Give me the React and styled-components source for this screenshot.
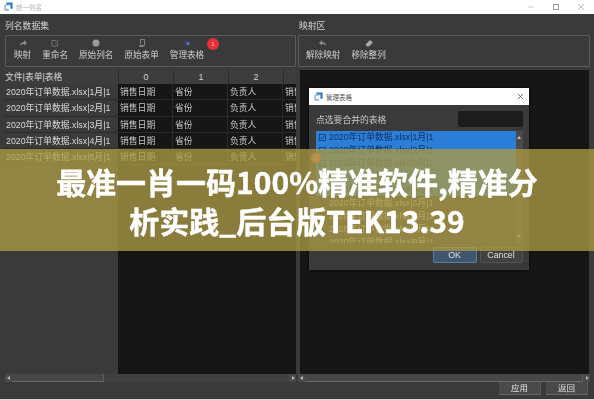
import React from "react";
import styled, {createGlobalStyle} from "styled-components";

const CJK = `"Liberation Sans", "Noto Sans CJK SC", sans-serif`;

const GlobalStyle = createGlobalStyle`
    html, body {
        margin: 0;
        padding: 0;
        background: #3a3a3a;
    }
    * {
        box-sizing: border-box;
    }
`;

const Page = styled.div`
    position: relative;
    width: 594px;
    height: 400px;
    overflow: hidden;
    display: flex;
    flex-direction: column;
    background: #3a3a3a;
    border-bottom: 1px solid #d8d8d8;
    font-family: ${CJK};
    font-size: 8.8px;
    color: #d4d4d4;
`;

const Soft = styled.div`
    flex: 1;
    min-height: 0;
    display: flex;
    flex-direction: column;
    filter: blur(0.35px);
`;

const TitleBar = styled.div`
    height: 13.5px;
    flex: none;
    background: #fff;
    display: flex;
    align-items: center;
    padding: 0 10px 0 4px;
    gap: 3px;
    color: #b0b0b0;
    font-size: 6.5px;
`;

const TitleText = styled.span`
    flex: 1;
`;

const WinControls = styled.div`
    display: flex;
    align-items: center;
    gap: 19px;
`;

const Panels = styled.div`
    flex: 1;
    min-height: 0;
    display: flex;
    padding-left: 5px;
`;

const Panel = styled.div`
    width: ${p => p.$width}px;
    margin-left: ${p => p.$offset || 0}px;
    display: flex;
    flex-direction: column;
`;

const PanelTitle = styled.div`
    height: 21.5px;
    flex: none;
    padding: 6px 0 0 ${p => p.$pad || 0}px;
    line-height: 13px;
    font-size: 8.8px;
`;

const Toolbar = styled.div`
    height: 32px;
    flex: none;
    border: 1px solid #5a5a5a;
    border-radius: 1px;
    display: flex;
    padding: 2px 0 0 ${p => p.$pad}px;
    gap: ${p => p.$gap}px;
`;

const ToolButton = styled.div`
    display: flex;
    flex-direction: column;
    align-items: center;
    font-size: 8.6px;
    line-height: 12px;
    gap: 1px;
    color: #cfcfcf;
    white-space: nowrap;
`;

const ToolIcon = styled.svg`
    width: 10px;
    height: 10px;
    display: block;
`;

const Table = styled.div`
    flex: 1;
    min-height: 0;
    margin: 2.5px ${p => p.$inset ? "1px" : "0"} 0 ${p => p.$inset ? "2px" : "0"};
    display: flex;
    flex-direction: column;
    overflow: hidden;
    background: #161616;
`;

const HeadRow = styled.div`
    height: 14.5px;
    flex: none;
    display: flex;
    background: #3d3d3d;
`;

const Row = styled.div`
    height: 16.3px;
    flex: none;
    display: flex;
    border-bottom: 1px solid #2b2b2b;
`;

const FillRow = styled.div`
    flex: 1;
    display: flex;
`;

const Corner = styled.div`
    width: 113px;
    flex: none;
    line-height: 15px;
    background: #3d3d3d;
`;

const HeadCell = styled.div`
    width: 55px;
    flex: none;
    text-align: center;
    line-height: 15px;
    border-left: 1px solid #2c2c2c;
`;

const RowHead = styled.div`
    width: 113px;
    flex: none;
    background: #3a3a3a;
    padding-left: 1px;
    line-height: 16px;
    white-space: nowrap;
    overflow: hidden;
    color: #d8d8d8;
    font-size: 8.8px;
`;

const Cell = styled.div`
    width: 55px;
    flex: none;
    padding-left: 2px;
    line-height: 16px;
    white-space: nowrap;
    overflow: hidden;
    border-right: 1px solid #2b2b2b;
    color: #c8c8c8;
`;

const ScrollBar = styled.div`
    height: 8px;
    flex: none;
    display: flex;
    background: #404040;
`;

const ScrollArrow = styled.div`
    width: 7px;
    flex: none;
    display: flex;
    align-items: center;
    justify-content: center;
    background: #4a4a4a;
    &::before {
        content: "";
        border: 2px solid transparent;
        ${p => p.$right ? "border-left: 3px solid #b8b8b8; margin-left: 3px;" : "border-right: 3px solid #b8b8b8; margin-right: 3px;"}
    }
`;

const ScrollThumb = styled.div`
    width: ${p => p.$width}px;
    flex: none;
    background: #474747;
    border-bottom: 1px solid #6a6a6a;
    border-right: 1px solid #5c5c5c;
`;

const ScrollTrack = styled.div`
    flex: 1;
`;

const Footer = styled.div`
    height: 17.5px;
    flex: none;
    display: flex;
    justify-content: flex-end;
    gap: 5px;
    padding-right: 6px;
`;

const FootButton = styled.div`
    width: 42px;
    height: 13px;
    background: #4a4a4a;
    border-bottom: 1px solid #666;
    border-right: 1px solid #5a5a5a;
    text-align: center;
    line-height: 13px;
    font-size: 8.5px;
    color: #e0e0e0;
`;

const Dialog = styled.div`
    position: absolute;
    left: 309px;
    top: 88px;
    width: 220px;
    height: 182px;
    background: #3a3a3a;
    box-shadow: 0 0 2px #000;
    display: flex;
    flex-direction: column;
    filter: blur(0.35px);
`;

const DialogTitle = styled.div`
    height: 17px;
    flex: none;
    background: #fff;
    display: flex;
    align-items: center;
    gap: 3px;
    padding: 0 6px 0 5px;
    color: #555;
    font-size: 6.5px;
`;

const DialogBody = styled.div`
    flex: 1;
    padding: 6px 6.5px 0 7px;
    display: flex;
    flex-direction: column;
`;

const DialogHead = styled.div`
    height: 16px;
    flex: none;
    display: flex;
    justify-content: space-between;
    align-items: center;
    font-size: 8.8px;
    color: #c8c8c8;
`;

const SearchBox = styled.div`
    width: 65px;
    height: 16px;
    background: #1c1c1c;
    border-radius: 2px;
`;

const ListWrap = styled.div`
    height: 112px;
    margin-top: 4px;
    flex: none;
    display: flex;
`;

const List = styled.div`
    flex: 1;
    overflow: hidden;
    background: #3a3a3a;
`;

const ListItem = styled.div`
    height: 13.1px;
    display: flex;
    align-items: center;
    gap: 2px;
    padding-left: 3px;
    line-height: 13px;
    white-space: nowrap;
    font-size: 8.8px;
    background: ${p => p.$on ? "#2c7fd8" : "transparent"};
    color: ${p => p.$on ? "#123060" : "#c8c8c8"};
`;

const Check = styled.svg`
    width: 7px;
    height: 7px;
    flex: none;
    margin-right: 1px;
    visibility: ${p => p.$on ? "visible" : "hidden"};
`;

const ListScroll = styled.div`
    width: 7px;
    flex: none;
    background: #4a4a4a;
    display: flex;
    flex-direction: column;
    justify-content: space-between;
    align-items: center;
    padding: 3px 0;
    &::before, &::after {
        content: "";
        border: 2px solid transparent;
    }
    &::before {
        border-bottom: 3px solid #c0c0c0;
    }
    &::after {
        border-top: 3px solid #c0c0c0;
    }
`;

const DialogActions = styled.div`
    margin-top: 4px;
    display: flex;
    justify-content: flex-end;
    gap: 3px;
`;

const DialogButton = styled.div`
    width: ${p => p.$primary ? 44 : 43}px;
    height: 16px;
    border-radius: 2px;
    border: 1px solid ${p => p.$primary ? "#5b7da6" : "#555"};
    background: ${p => p.$primary ? "#40556e" : "#424242"};
    text-align: center;
    line-height: 14px;
    font-size: 8.8px;
    color: #e0e0e0;
`;

const Badge = styled.div`
    position: absolute;
    left: ${p => p.$x}px;
    top: ${p => p.$y}px;
    width: ${p => p.$size}px;
    height: ${p => p.$size}px;
    border-radius: 50%;
    background: ${p => p.$color};
    color: #f6c0c0;
    font-size: 6px;
    line-height: ${p => p.$size}px;
    text-align: center;
`;

const Banner = styled.div`
    position: absolute;
    left: 0;
    right: 0;
    top: 149px;
    height: 102px;
    padding: 13px 55px 0;
    background: rgba(172, 154, 70, 0.78);
    color: #fff;
    text-align: center;
    font-family: "Noto Sans CJK SC", sans-serif;
    font-weight: 700;
    font-size: 30px;
    line-height: 39px;
    -webkit-text-stroke: 0.4px #fff;
`;

const Logo = ({size}) => (
    <svg width={size} height={size} viewBox="0 0 12 12">
        <path d="M3 0.5h8.5v8.5h-3V3.5H3z" fill="#2f7fc4" />
        <path d="M0.5 3.5h6v1.5H2.5v4h4v2.5h-6z" fill="#8ab8e0" />
    </svg>
);

const rows = [1, 2, 3, 4, 5];
const listItems = [1, 2, 3, 4, 5, 6, 7, 8, 9];

const App = () => {
    return (
        <Page>
            <GlobalStyle />
            <TitleBar>
                <Logo size={9} />
                <TitleText>统一列名</TitleText>
                <WinControls>
                    <svg width="6" height="6" viewBox="0 0 6 6"><path d="M0 3h6" stroke="#ccc" /></svg>
                    <svg width="6" height="6" viewBox="0 0 6 6"><rect x="0.5" y="0.5" width="5" height="5" fill="none" stroke="#999" /></svg>
                    <svg width="6" height="6" viewBox="0 0 6 6"><path d="M0 0l6 6M6 0l-6 6" stroke="#bbb" /></svg>
                </WinControls>
            </TitleBar>
            <Soft>
                <Panels>
                    <Panel $width={291}>
                        <PanelTitle>列名数据集</PanelTitle>
                        <Toolbar $pad={8} $gap={11}>
                            <ToolButton>
                                <ToolIcon viewBox="0 0 10 10"><path d="M2 8c0-3 2-4 4-4V2l3 3-3 2.500V6C4.500 6 3 6.500 2 8z" fill="#8c8c8c" /></ToolIcon>
                                映射
                            </ToolButton>
                            <ToolButton>
                                <ToolIcon viewBox="0 0 10 10"><path d="M2 2.500h4M2 2.500v5.500h5.500V5M5 6l3.500-4" fill="none" stroke="#777" strokeWidth="0.9" /></ToolIcon>
                                重命名
                            </ToolButton>
                            <ToolButton>
                                <ToolIcon viewBox="0 0 10 10"><circle cx="5" cy="5" r="3.500" fill="#9a9a9a" /></ToolIcon>
                                原始列名
                            </ToolButton>
                            <ToolButton>
                                <ToolIcon viewBox="0 0 10 10"><path d="M3.500 1.500h4v6h-5M3.500 1.500v4.500M2.500 7.500v1h4" fill="none" stroke="#8a8a8a" strokeWidth="0.9" /></ToolIcon>
                                原始表单
                            </ToolButton>
                            <ToolButton>
                                <ToolIcon viewBox="0 0 10 10"><circle cx="5" cy="5" r="3.200" fill="#3a3f66" /><circle cx="6" cy="5.500" r="1.600" fill="#6d76a8" /></ToolIcon>
                                管理表格
                            </ToolButton>
                        </Toolbar>
                        <Table>
                            <HeadRow>
                                <Corner>文件|表单|表格</Corner>
                                <HeadCell>0</HeadCell>
                                <HeadCell>1</HeadCell>
                                <HeadCell>2</HeadCell>
                                <HeadCell />
                            </HeadRow>
                            {rows.map(n => (
                                <Row key={n}>
                                    <RowHead>2020年订单数据.xlsx|{n}月|1</RowHead>
                                    <Cell>销售日期</Cell>
                                    <Cell>省份</Cell>
                                    <Cell>负责人</Cell>
                                    <Cell>销售额</Cell>
                                </Row>
                            ))}
                            <FillRow><RowHead /></FillRow>
                        </Table>
                        <ScrollBar>
                            <ScrollArrow />
                            <ScrollThumb $width={92} />
                            <ScrollTrack />
                            <ScrollArrow $right />
                        </ScrollBar>
                    </Panel>
                    <Panel $width={292} $offset={2}>
                        <PanelTitle $pad={1}>映射区</PanelTitle>
                        <Toolbar $pad={7} $gap={11}>
                            <ToolButton>
                                <ToolIcon viewBox="0 0 10 10"><path d="M8 8C8 5 6 4 4 4V2L1 5l3 2.500V6c1.500 0 3 .5 4 2z" fill="#8c8c8c" /></ToolIcon>
                                解除映射
                            </ToolButton>
                            <ToolButton>
                                <ToolIcon viewBox="0 0 10 10"><path d="M1.500 6.500L6 2l3 2.500L5 8.500H3z" fill="#a8a8a8" /></ToolIcon>
                                移除整列
                            </ToolButton>
                        </Toolbar>
                        <Table $inset />
                        <ScrollBar>
                            <ScrollArrow />
                            <ScrollThumb $width={278} />
                            <ScrollTrack />
                            <ScrollArrow $right />
                        </ScrollBar>
                    </Panel>
                </Panels>
                <Footer>
                    <FootButton>应用</FootButton>
                    <FootButton>返回</FootButton>
                </Footer>
            </Soft>
            <Dialog>
                <DialogTitle>
                    <Logo size={9} />
                    <TitleText>管理表格</TitleText>
                    <svg width="5" height="5" viewBox="0 0 6 6"><path d="M0 0l6 6M6 0l-6 6" stroke="#555" /></svg>
                </DialogTitle>
                <DialogBody>
                    <DialogHead>
                        点选要合并的表格
                        <SearchBox />
                    </DialogHead>
                    <ListWrap>
                        <List>
                            {listItems.map(n => (
                                <ListItem key={n} $on={n < 6}>
                                    <Check $on={n < 6} viewBox="0 0 7 7">
                                        <rect x="0.5" y="0.5" width="6" height="6" fill="none" stroke="#123060" strokeWidth="0.7" />
                                        <path d="M1.500 3.500l1.500 1.500 2.500-3" fill="none" stroke="#123060" strokeWidth="0.7" />
                                    </Check>
                                    2020年订单数据.xlsx|{n}月|1
                                </ListItem>
                            ))}
                        </List>
                        <ListScroll />
                    </ListWrap>
                    <DialogActions>
                        <DialogButton $primary>OK</DialogButton>
                        <DialogButton>Cancel</DialogButton>
                    </DialogActions>
                </DialogBody>
            </Dialog>
            <Badge $x={207} $y={38} $size={12} $color="#e8303a">1</Badge>
            <Badge $x={311} $y={153} $size={10} $color="#e8622a">2</Badge>
            <Banner>最准一肖一码100%精准软件,精准分析实践_后台版TEK13.39</Banner>
        </Page>
    );
};

export default App;
